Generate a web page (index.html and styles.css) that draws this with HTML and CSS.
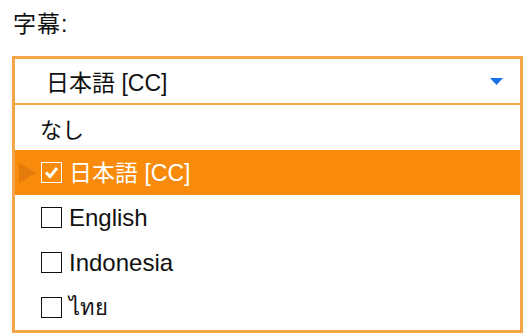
FILE: index.html
```html
<!DOCTYPE html>
<html lang="ja">
<head>
<meta charset="utf-8">
<link rel="stylesheet" href="styles.css">
</head>
<body>
<div class="page">
  <div class="label">字幕:</div>
  <div class="select">
    <div class="header">
      <span class="current">日本語 [CC]</span>
      <svg class="caret" width="13" height="7" viewBox="0 0 13 7"><polygon points="0,0 13,0 6.5,7" fill="#1b6fe6"/></svg>
    </div>
    <ul class="options">
      <li class="option plain">なし</li>
      <li class="option selected">
        <svg class="pointer" width="17" height="20" viewBox="0 0 17 20"><polygon points="0,0 17,10 0,20" fill="#e47c0c"/></svg>
        <span class="box checked"><svg width="19" height="19" viewBox="0 0 19 19"><polyline points="4,9.5 8,13.5 15,5" fill="none" stroke="#fff" stroke-width="3"/></svg></span>
        <span class="text">日本語 [CC]</span>
      </li>
      <li class="option"><span class="box"></span><span class="text">English</span></li>
      <li class="option"><span class="box"></span><span class="text">Indonesia</span></li>
      <li class="option"><span class="box"></span><span class="text thai">ไทย</span></li>
    </ul>
  </div>
</div>
</body>
</html>
```
FILE: styles.css
```css
html, body {
  margin: 0;
  padding: 0;
  background: #fff;
}
body {
  font-family: "Liberation Sans", "Noto Sans CJK JP", sans-serif;
  color: #111;
}
.page {
  padding: 0 6px 0 12px;
  width: 511px;
}
.label {
  height: 56px;
  box-sizing: border-box;
  padding-top: 8px;
  padding-left: 1px;
  font-size: 23px;
  line-height: 32px;
  letter-spacing: 1px;
}
.select {
  width: 511px;
  box-sizing: border-box;
  border: 3px solid #f5a548;
}
.header {
  height: 44px;
  border-bottom: 2px solid #f5a548;
  display: flex;
  align-items: center;
  justify-content: space-between;
  padding: 0 17px 0 31px;
  font-size: 23px;
}
.caret {
  display: block;
  margin-top: 1px;
}
.options {
  list-style: none;
  margin: 0;
  padding: 0;
}
.option {
  position: relative;
  height: 45px;
  display: flex;
  align-items: center;
  padding-left: 26px;
  font-size: 24px;
}
.option.plain {
  padding-left: 25px;
  font-size: 22px;
}
.option.selected {
  background: #f88b0b;
  color: #fff;
}
.pointer {
  position: absolute;
  left: 4px;
  top: 13px;
}
.box {
  width: 21px;
  height: 21px;
  box-sizing: border-box;
  border: 1px solid #111;
  background: #fff;
  margin-right: 7px;
  flex: none;
  display: flex;
  align-items: center;
  justify-content: center;
}
.box.checked {
  border-color: #fff;
  background: transparent;
}
.box svg {
  display: block;
}
.text {
  line-height: 28px;
}
.selected .text {
  font-size: 23px;
}
.thai {
  font-family: "DejaVu Sans", "Noto Sans", sans-serif;
  font-size: 22px;
}
```
